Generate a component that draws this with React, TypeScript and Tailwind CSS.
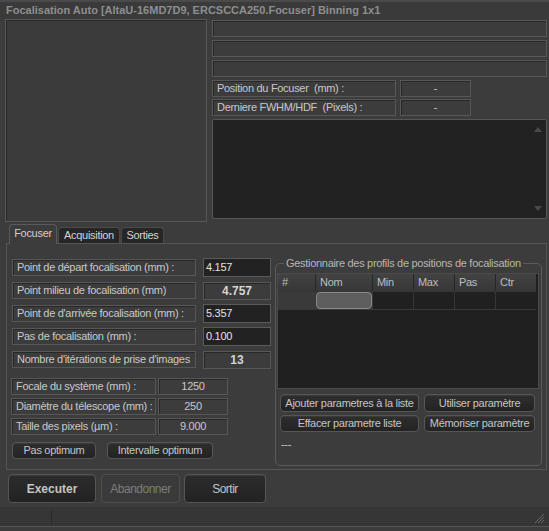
import React from 'react'

const sunken = 'border border-[#575757] shadow-[inset_1px_1px_0_#282828]'
const smallBtn =
  'flex items-center justify-center whitespace-nowrap rounded-[4px] border border-[#565656] bg-gradient-to-b from-[#2e2e2e] to-[#232323] text-[11px] text-[#c4c4c4] shadow-[inset_0_1px_0_#3a3a3a]'

function InfoRow({ label }: { label: string }) {
  return (
    <div className="flex h-[17px] gap-[4px]">
      <div className={`${sunken} flex w-[184px] items-center whitespace-pre pl-[4px] text-[#c8c8c8]`}>{label}</div>
      <div className={`${sunken} flex w-[71px] items-center justify-center text-[#c8c8c8]`}>-</div>
    </div>
  )
}

function ParamRow({ label, value, kind }: { label: string; value: string; kind: 'input' | 'calc' }) {
  return (
    <div className="flex h-[19px] items-center gap-[7px]">
      <div className={`${sunken} flex h-[17px] w-[184px] items-center whitespace-nowrap pl-[4px] text-[#c8c8c8]`}>{label}</div>
      {kind === 'input' ? (
        <div className="flex h-[19px] w-[68px] items-center border border-[#5a5a5a] bg-[#222222] pl-[2px] text-[#e2e2e2]">
          {value}
        </div>
      ) : (
        <div className={`${sunken} flex h-[18px] w-[68px] items-center justify-center text-[12px] font-bold tracking-normal text-[#d4d4d4]`}>
          {value}
        </div>
      )}
    </div>
  )
}

function SysRow({ label, value }: { label: string; value: string }) {
  return (
    <div className="flex h-[17px] gap-[2px]">
      <div className={`${sunken} flex w-[145px] items-center whitespace-nowrap pl-[4px] text-[#c8c8c8]`}>{label}</div>
      <div className={`${sunken} flex w-[70px] items-center justify-center text-[#c8c8c8]`}>{value}</div>
    </div>
  )
}

export default function App() {
  const cols = ['#', 'Nom', 'Min', 'Max', 'Pas', 'Ctr']
  return (
    <div className="flex h-[531px] w-[549px] flex-col overflow-hidden bg-[#3c3c3c] font-['Liberation_Sans',Arial,sans-serif] text-[11px] tracking-[-0.3px] text-[#c6c6c6]">
      <div className="h-[19px] shrink-0 border-t-[2px] border-[#4a4a4a] bg-[#3a3a3a] pl-[6px] text-[11px] font-bold leading-[16px] tracking-normal text-[#8e8e8e]">
        Focalisation Auto [AltaU-16MD7D9, ERCSCCA250.Focuser] Binning 1x1
      </div>

      <div className="flex h-[203px] shrink-0 gap-[5px] pl-[5px]">
        <div className={`${sunken} h-[203px] w-[202px] bg-[#3b3b3b]`} />
        <div className="flex w-[335px] flex-col pt-[1px]">
          <div className="flex flex-col gap-[3px]">
            <div className={`${sunken} h-[17px]`} />
            <div className={`${sunken} h-[17px]`} />
            <div className={`${sunken} h-[17px]`} />
          </div>
          <div className="mt-[3px] flex flex-col gap-[2px]">
            <InfoRow label="Position du Focuser  (mm) :" />
            <InfoRow label="Derniere FWHM/HDF  (Pixels) :" />
          </div>
          <div className="relative mt-[3px] h-[100px] rounded-[2px] border border-[#575757] bg-[#222222]">
            <svg className="absolute right-[4px] top-[7px]" width="8" height="5" viewBox="0 0 8 5">
              <path d="M0 5 L4 0 L8 5 Z" fill="#4a4a4a" />
            </svg>
            <svg className="absolute bottom-[7px] right-[4px]" width="8" height="5" viewBox="0 0 8 5">
              <path d="M0 0 L4 5 L8 0 Z" fill="#4a4a4a" />
            </svg>
          </div>
        </div>
      </div>

      <div className="mt-[2px] flex h-[19px] shrink-0 items-end pl-[9px]">
        <div className="relative z-10 -mb-px flex h-[20px] w-[48px] items-center justify-center rounded-t-[4px] border border-b-0 border-[#5a5a5a] bg-[#3c3c3c] pb-[2px] text-[#cfcfcf]">
          Focuser
        </div>
        <div className="ml-px flex h-[16px] w-[62px] items-center justify-center rounded-t-[4px] border border-b-0 border-[#4a4a4a] bg-[#262626] text-[#d4d4d4]">
          Acquisition
        </div>
        <div className="ml-px flex h-[16px] w-[43px] items-center justify-center rounded-t-[4px] border border-b-0 border-[#4a4a4a] bg-[#262626] text-[#d4d4d4]">
          Sorties
        </div>
      </div>

      <div className="ml-[6px] flex h-[227px] w-[541px] shrink-0 border border-[#555555] pl-[5px]">
        <div className="flex flex-col pt-[14px]">
          <div className="flex flex-col gap-[4px]">
            <ParamRow label="Point de départ focalisation (mm) :" value="4.157" kind="input" />
            <ParamRow label="Point milieu de focalisation (mm)" value="4.757" kind="calc" />
            <ParamRow label="Point de d'arrivée focalisation (mm) :" value="5.357" kind="input" />
            <ParamRow label="Pas de focalisation (mm) :" value="0.100" kind="input" />
            <ParamRow label="Nombre d'itérations de prise d'images" value="13" kind="calc" />
          </div>
          <div className="-ml-px mt-[9px] flex flex-col gap-[3px]">
            <SysRow label="Focale du système (mm) :" value="1250" />
            <SysRow label="Diamètre du télescope (mm) :" value="250" />
            <SysRow label="Taille des pixels (µm) :" value="9.000" />
          </div>
          <div className="mt-[7px] flex gap-[11px]">
            <button className={`${smallBtn} h-[17px] w-[84px]`}>Pas optimum</button>
            <button className={`${smallBtn} h-[17px] w-[106px]`}>Intervalle optimum</button>
          </div>
        </div>

        <fieldset className="ml-[4px] mt-[13px] h-[209px] w-[267px] rounded-[5px] border border-[#5a5a5a]">
          <legend className="ml-[8px] whitespace-nowrap px-[2px] leading-[13px] text-[#b6b6b6]">
            Gestionnaire des profils de positions de focalisation
          </legend>
          <div className="ml-px mt-[3px] h-[116px] w-[262px] border border-[#4a4a4a] bg-[#202020]">
            <div className="grid w-[258px] grid-cols-[37px_56px_40px_40px_40px_40px] gap-px bg-[#262626]">
              {cols.map(c => (
                <div key={c} className="flex h-[17px] items-center bg-gradient-to-b from-[#434343] to-[#373737] pl-[4px] text-[#bdbdbd]">
                  {c}
                </div>
              ))}
            </div>
            <div className="grid w-[258px] grid-cols-[37px_56px_40px_40px_40px_40px] gap-px border-b border-[#3a3a3a] bg-[#363636] pt-px">
              <div className="h-[17px] bg-[#3a3a3a]" />
              <div className="h-[17px] rounded-[4px] border border-[#8a8a8a] bg-[#5e5e5e]" />
              <div className="h-[17px] bg-[#202020]" />
              <div className="h-[17px] bg-[#202020]" />
              <div className="h-[17px] bg-[#202020]" />
              <div className="h-[17px] bg-[#202020]" />
            </div>
          </div>
          <div className="ml-[4px] mt-[5px] flex gap-[5px]">
            <button className={`${smallBtn} h-[18px] w-[139px]`}>Ajouter parametres à la liste</button>
            <button className={`${smallBtn} h-[18px] w-[111px]`}>Utiliser paramètre</button>
          </div>
          <div className="ml-[4px] mt-[3px] flex gap-[5px]">
            <button className={`${smallBtn} h-[17px] w-[139px]`}>Effacer parametre liste</button>
            <button className={`${smallBtn} h-[17px] w-[111px]`}>Mémoriser paramètre</button>
          </div>
          <div className="ml-[5px] mt-[6px] leading-[12px] text-[#c8c8c8]">---</div>
        </fieldset>
      </div>

      <div className="ml-[8px] mt-[4px] flex h-[29px] shrink-0 gap-[5px]">
        <button className="flex w-[88px] items-center justify-center rounded-[4px] border border-[#555555] bg-gradient-to-b from-[#2c2c2c] to-[#222222] text-[12px] font-bold tracking-normal text-[#c4c4c4] shadow-[inset_0_1px_0_#3a3a3a]">
          Executer
        </button>
        <button className="flex w-[79px] items-center justify-center rounded-[4px] border border-[#4e4e4e] bg-[#3a3a3a] text-[12px] tracking-[-0.5px] text-[#7c7c7c]">
          Abandonner
        </button>
        <button className="-ml-px flex w-[82px] items-center justify-center rounded-[4px] border border-[#555555] bg-gradient-to-b from-[#2c2c2c] to-[#222222] text-[12px] tracking-[-0.5px] text-[#c4c4c4] shadow-[inset_0_1px_0_#3a3a3a]">
          Sortir
        </button>
      </div>

      <div className="relative mt-[4px] flex h-[20px] shrink-0 items-center border-b border-[#555555] bg-[#363636]">
        <div className="ml-[51px] h-[14px] w-px bg-[#2a2a2a]" />
        <svg className="absolute bottom-[2px] right-[4px]" width="11" height="11" viewBox="0 0 11 11">
          <path d="M10 1 L1 10 M10 4 L4 10 M10 7 L7 10" stroke="#6a6a6a" strokeWidth="1" />
        </svg>
      </div>
    </div>
  )
}
